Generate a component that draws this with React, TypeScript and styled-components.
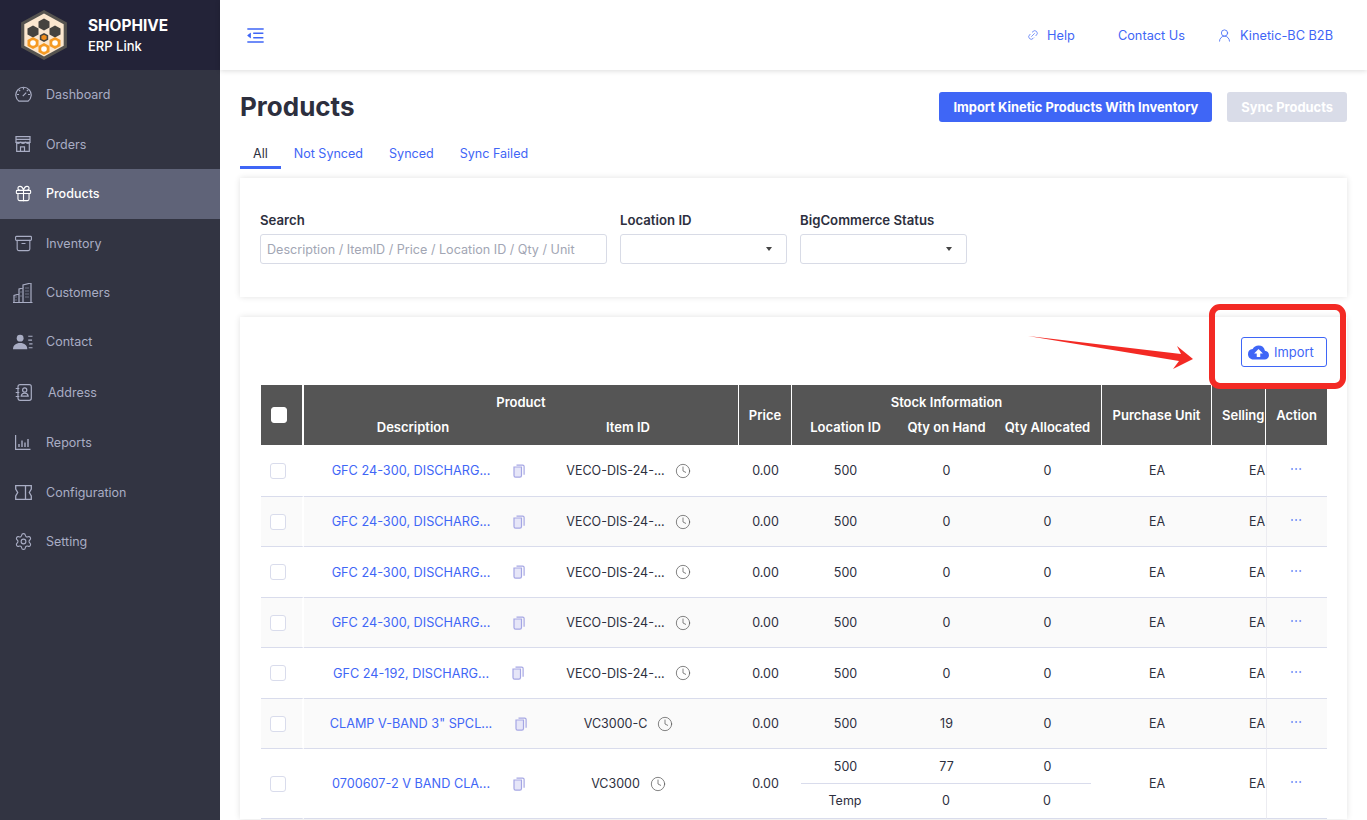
import styled, { createGlobalStyle } from 'styled-components';
import { Archive, Clock, Ellipsis, Gift, Link2, Settings, UserRound } from 'lucide-react';
import { AiOutlineMenuFold } from 'react-icons/ai';
import { MdCloudUpload } from 'react-icons/md';
import type { ReactNode } from 'react';

const BLUE = '#3f66f6';

const GlobalStyle = createGlobalStyle`
  html, body {
    margin: 0;
    height: 100%;
    overflow: hidden;
    background: #fff;
    font-family: Inter, "Liberation Sans", sans-serif;
    color: #2d2f3e;
  }
  * { box-sizing: border-box; }
`;

const Shell = styled.div`
  display: flex;
  height: 820px;
  overflow: hidden;
`;

const Sidebar = styled.aside`
  flex: 0 0 220px;
  background: #323442;
`;

const Brand = styled.div`
  display: flex;
  align-items: center;
  height: 70px;
  padding-left: 19px;
  gap: 19px;
  background: #232338;
  color: #fff;
`;

const BrandText = styled.div`
  display: flex;
  flex-direction: column;
  gap: 3px;
`;

const BrandName = styled.div`
  font-size: 15.4px;
  line-height: 18px;
  font-weight: 700;
`;

const BrandSub = styled.div`
  font-size: 13px;
  line-height: 16px;
  font-weight: 500;
`;

const NavItem = styled.div<{ $active?: boolean; $shift?: number; $h?: number }>`
  display: flex;
  align-items: center;
  height: ${(p) => p.$h || 49.5}px;
  padding-left: 13px;
  font-size: 12.5px;
  color: ${(p) => (p.$active ? '#fff' : '#a9adc4')};
  background: ${(p) => (p.$active ? '#5f6378' : 'transparent')};
  font-weight: ${(p) => (p.$active ? 500 : 400)};
  span { margin-left: ${(p) => 13 + (p.$shift || 0)}px; }
`;

const NavIcon = styled.div`
  display: flex;
  justify-content: center;
  align-items: center;
  width: 20px;
  height: 20px;
`;

const Main = styled.main`
  flex: 1;
  min-width: 0;
`;

const TopBar = styled.header`
  display: flex;
  align-items: center;
  height: 70px;
  padding: 0 34px 0 25px;
  background: #fff;
  box-shadow: 0 1px 5px rgb(0 0 0 / 14%);
  color: ${BLUE};
  position: relative;
`;

const TopLinks = styled.nav`
  display: flex;
  align-items: center;
  margin-left: auto;
  font-size: 12.75px;
`;

const TopLink = styled.a<{ $gap: number; $left: number }>`
  display: flex;
  align-items: center;
  gap: ${(p) => p.$gap}px;
  margin-left: ${(p) => p.$left}px;
`;

const Content = styled.div`
  padding: 22px 20px 0;
`;

const TitleRow = styled.div`
  display: flex;
  align-items: center;
  height: 30px;
  gap: 15px;
`;

const Title = styled.h1`
  margin: 0 auto 0 0;
  font-size: 26px;
  line-height: 30px;
  font-weight: 700;
`;

const Button = styled.button<{ $disabled?: boolean }>`
  height: 30px;
  border: 0;
  border-radius: 3px;
  padding: 0 14px;
  font: 700 12.9px Inter, sans-serif;
  color: #fff;
  background: ${(p) => (p.$disabled ? '#d9dce8' : BLUE)};
`;

const Tabs = styled.div`
  display: flex;
  margin-top: 23px;
  height: 24px;
`;

const Tab = styled.div<{ $active?: boolean }>`
  padding: 0 13px;
  font-size: 12.55px;
  line-height: 17px;
  color: ${(p) => (p.$active ? '#2d2f3e' : BLUE)};
  border-bottom: 3px solid ${(p) => (p.$active ? BLUE : 'transparent')};
`;

const Card = styled.section`
  background: #fff;
  box-shadow: 0 0 6px rgb(0 0 0 / 12%);
`;

const FilterCard = styled(Card)`
  display: grid;
  grid-template-columns: 347px 167px 167px;
  column-gap: 13px;
  margin-top: 9px;
  padding: 34px 20px 33px;
`;

const Field = styled.label`
  display: flex;
  flex-direction: column;
  gap: 6px;
`;

const FieldLabel = styled.div`
  font-size: 13.2px;
  line-height: 16px;
  font-weight: 600;
`;

const SearchInput = styled.input`
  height: 30px;
  padding: 0 6px;
  border: 1px solid #d8dbe6;
  border-radius: 3px;
  font: 400 12.6px Inter, sans-serif;
  &::placeholder { color: #a2a6b4; opacity: 1; }
`;

const SelectBox = styled.div`
  display: flex;
  align-items: center;
  justify-content: flex-end;
  height: 30px;
  padding-right: 14px;
  border: 1px solid #d8dbe6;
  border-radius: 3px;
`;

const Caret = styled.i`
  border-top: 4px solid #444;
  border-left: 3.5px solid transparent;
  border-right: 3.5px solid transparent;
`;

const TableCard = styled(Card)`
  position: relative;
  margin-top: 20px;
  padding: 20px 20px 0 21px;
`;

const TableTools = styled.div`
  display: flex;
  justify-content: flex-end;
  margin-bottom: 18px;
`;

const ImportButton = styled.button`
  display: flex;
  align-items: center;
  gap: 5px;
  width: 86px;
  height: 30px;
  padding: 0 6px;
  border: 1px solid ${BLUE};
  border-radius: 3px;
  background: #fff;
  color: ${BLUE};
  font: 400 12.9px Inter, sans-serif;
`;

const RedBox = styled.div`
  position: absolute;
  left: 969px;
  top: -13px;
  width: 137px;
  height: 85px;
  border: 6px solid #f32a24;
  border-radius: 11px;
`;

const ArrowMark = styled.svg`
  position: absolute;
  left: 788px;
  top: 16px;
`;

const Table = styled.table`
  width: 1066px;
  table-layout: fixed;
  border-collapse: separate;
  border-spacing: 0;
  font-size: 12.5px;
`;

const Th = styled.th<{ $line?: boolean; $upper?: boolean; $lower?: boolean }>`
  height: 30px;
  padding: ${(p) => (p.$upper ? '4px 0 0' : p.$lower ? '0 0 6px' : '0')};
  background: #555;
  color: #fff;
  font-size: 13px;
  font-weight: 600;
  text-align: center;
  white-space: nowrap;
  overflow: hidden;
  border-right: ${(p) => (p.$line ? '1px solid #fff' : '0')};
`;

const CheckTh = styled(Th)`
  border-right: 2px solid #fff;
`;

const DescTh = styled(Th)`
  padding-left: 4px;
`;

const SellingTh = styled(Th)`
  text-align: left;
  padding-left: 10px;
`;

const Row = styled.tr<{ $alt?: boolean }>`
  td { background: ${(p) => (p.$alt ? '#fafafa' : '#fff')}; }
`;

const Td = styled.td<{ $h: number }>`
  height: ${(p) => p.$h}px;
  padding: 0;
  text-align: center;
  border-bottom: 1px solid #d9dcec;
  white-space: nowrap;
`;

const CheckTd = styled(Td)`
  border-right: 2px solid #fff;
  padding-left: 9px;
`;

const SellingTd = styled(Td)`
  text-align: right;
  padding-right: 1px;
`;

const ActionTd = styled(Td)`
  color: ${BLUE};
  border-left: 1px solid #ececf1;
  line-height: 0;
  padding-right: 2px;
  svg { margin-top: -3px; }
`;

const Check = styled.div<{ $head?: boolean }>`
  width: 16px;
  height: 16px;
  border-radius: 3px;
  background: #fff;
  border: 1px solid ${(p) => (p.$head ? '#fff' : '#d9dcec')};
  margin-left: ${(p) => (p.$head ? 10 : 0)}px;
`;

const DescCell = styled.div`
  display: flex;
  justify-content: center;
  align-items: center;
`;

const ProductLink = styled.a`
  color: ${BLUE};
  font-size: 12.7px;
`;

const CopyMark = styled.svg`
  flex: none;
  margin: 0 -35px 0 23px;
`;

const ItemCell = styled.div`
  display: flex;
  justify-content: center;
  align-items: center;
  gap: 10px;
  svg { color: #555; flex: none; }
`;

const StockGrid = styled.div`
  display: grid;
  grid-template-columns: repeat(3, 101px);
  padding-left: 3px;
`;

const StockLine = styled(StockGrid)<{ $split?: boolean }>`
  padding-top: ${(p) => (p.$split ? 9 : 0)}px;
  padding-bottom: ${(p) => (p.$split ? 9 : 0)}px;
  & + & {
    border-top: 1px solid #d9dcec;
    margin: 0 11px 0 9px;
    padding-left: 0;
    grid-template-columns: 88px 114px 88px;
  }
`;

const HexLogo = () => {
  const hex = (cx: number, cy: number, r: number) =>
    [0, 1, 2, 3, 4, 5]
      .map((i) => {
        const a = (Math.PI / 3) * i - Math.PI / 2;
        return `${(cx + r * 1.06 * Math.cos(a)).toFixed(1)},${(cy + r * Math.sin(a)).toFixed(1)}`;
      })
      .join(' ');
  return (
    <svg width="50" height="54" viewBox="0 0 50 54">
      <polygon points={hex(25, 27, 25)} fill="#55534f" />
      <polygon points={hex(25, 27, 21.5)} fill="#fbe7cf" />
      {[[25, 16.5], [14, 23.5], [36, 23.5]].map(([x, y]) => (
        <polygon key={`${x}-${y}`} points={hex(x, y, 6)} fill="#45433f" />
      ))}
      <polygon points={hex(25, 29.5, 4.6)} fill="#45433f" />
      <polygon points={hex(25, 29.5, 2.8)} fill="#f08c1a" />
      {[[14, 35], [25, 41], [36, 35]].map(([x, y]) => (
        <g key={`${x}-${y}`}>
          <polygon points={hex(x, y, 6)} fill="#f59a23" />
          <circle cx={x} cy={y} r="2.8" fill="#fff" />
        </g>
      ))}
    </svg>
  );
};

const stroke = { fill: 'none', stroke: 'currentColor', strokeWidth: 1.2 };

const GaugeIcon = () => (
  <svg width="17" height="17" viewBox="0 0 17 17" {...stroke}>
    <path d="M4 15.2a7.7 7.7 0 1 1 9 0z" />
    <path d="M8.5 1.5v2M2 8.5h2M13 8.5h2M3.8 3.8l1.4 1.4M13.2 3.8l-1.4 1.4M7.8 10.2l3.4-3.6" />
  </svg>
);

const StoreIcon = () => (
  <svg width="16" height="16" viewBox="0 0 16 16" {...stroke}>
    <path d="M1 .7h14v5.6H1zM1 3.4h14" />
    <path d="M1.7 6.3v9h12.6v-9M5.5 15.3v-4.4h4v4.4" />
    <path d="M1 6.3q2.3 2 4.7 0 2.3 2 4.6 0 2.4 2 4.7 0" />
  </svg>
);

const AddressIcon = () => (
  <svg width="17" height="17" viewBox="0 0 17 17" {...stroke}>
    <rect x="3" y=".7" width="13.3" height="15.6" rx="2" />
    <path d="M.7 4.5h3.6M.7 8.5h3.6M.7 12.5h3.6" />
    <circle cx="9.7" cy="6" r="2.1" />
    <path d="M6.2 12.2c.3-2 1.7-3 3.5-3s3.2 1 3.5 3z" />
  </svg>
);

const BuildingsIcon = () => (
  <svg width="20" height="20" viewBox="0 0 20 20" {...stroke}>
    <path d="M1 19.5v-7l5-1.5v8.5M6 19.5V6l4-1v14.5M10 19.5V2l8-2v19.5M0 19.5h19.5" />
    <path d="M12.5 5h3M12.5 8h3M12.5 11h3M12.5 14h3M2.5 14h2M2.5 17h2M7.5 9h1M7.5 13h1" strokeDasharray="1 1" />
  </svg>
);

const ContactIcon = () => (
  <svg width="21" height="16" viewBox="0 0 21 16">
    <circle cx="7.5" cy="4" r="3.6" fill="currentColor" />
    <path d="M0 15.5c0-4 3-6.5 7.5-6.5s7.5 2.5 7.5 6.5z" fill="currentColor" />
    <path d="M16 2h4.5M16 6h4M17 10h3.5M16.5 14h4" {...stroke} />
  </svg>
);

const ReportsIcon = () => (
  <svg width="16" height="15" viewBox="0 0 16 15" {...stroke}>
    <path d="M.6 0v14.4H15.5" />
    <path d="M4 12V9M7 12V5.5M10 12V7.5M13 12V4" strokeWidth="1.4" />
  </svg>
);

const ConfigIcon = () => (
  <svg width="17" height="15" viewBox="0 0 17 15" {...stroke} strokeWidth="1.3">
    <path d="M.7.7h15.6v3.4l-2 3.4 2 3.4v3.4H.7v-3.4l2-3.4-2-3.4zM10.5.7v13.6" />
  </svg>
);

const CopyIcon = () => (
  <CopyMark width="12" height="14" viewBox="0 0 12 14" fill="none" stroke="#a5a6e4" strokeWidth="1.2">
    <path d="M3.5 1.2h6.2a1.4 1.4 0 0 1 1.4 1.4v8.2" />
    <path d="M1 3h7.5v8.5a1.6 1.6 0 0 1-1.6 1.6H2.6A1.6 1.6 0 0 1 1 11.5z" fill="#e6e6f8" />
  </CopyMark>
);

interface NavEntry {
  label: string;
  icon: ReactNode;
  active?: boolean;
  shift?: number;
  h?: number;
}

const lucideProps = { size: 19, strokeWidth: 1.4 };

const nav: NavEntry[] = [
  { label: 'Dashboard', icon: <GaugeIcon /> },
  { label: 'Orders', icon: <StoreIcon /> },
  { label: 'Products', icon: <Gift {...lucideProps} />, active: true },
  { label: 'Inventory', icon: <Archive {...lucideProps} /> },
  { label: 'Customers', icon: <BuildingsIcon /> },
  { label: 'Contact', icon: <ContactIcon />, h: 48.5 },
  { label: 'Address', icon: <AddressIcon />, shift: 2, h: 52 },
  { label: 'Reports', icon: <ReportsIcon /> },
  { label: 'Configuration', icon: <ConfigIcon /> },
  { label: 'Setting', icon: <Settings {...lucideProps} /> },
];

interface ProductRow {
  desc: string;
  item: string;
  h: number;
  stock: string[][];
}

const veco = (desc: string, h: number): ProductRow => ({ desc, item: 'VECO-DIS-24-...', h, stock: [['500', '0', '0']] });

const rows: ProductRow[] = [
  veco('GFC 24-300, DISCHARG...', 52),
  veco('GFC 24-300, DISCHARG...', 50),
  veco('GFC 24-300, DISCHARG...', 51),
  veco('GFC 24-300, DISCHARG...', 50),
  veco('GFC 24-192, DISCHARG...', 51),
  { desc: 'CLAMP V-BAND 3" SPCL...', item: 'VC3000-C', h: 50, stock: [['500', '19', '0']] },
  { desc: '0700607-2 V BAND CLA...', item: 'VC3000', h: 70, stock: [['500', '77', '0'], ['Temp', '0', '0']] },
];

export default function App() {
  return (
    <Shell>
      <GlobalStyle />
      <Sidebar>
        <Brand>
          <HexLogo />
          <BrandText>
            <BrandName>SHOPHIVE</BrandName>
            <BrandSub>ERP Link</BrandSub>
          </BrandText>
        </Brand>
        {nav.map((n) => (
          <NavItem key={n.label} $active={n.active} $shift={n.shift} $h={n.h}>
            <NavIcon>{n.icon}</NavIcon>
            <span>{n.label}</span>
          </NavItem>
        ))}
      </Sidebar>
      <Main>
        <TopBar>
          <AiOutlineMenuFold size={21} />
          <TopLinks>
            <TopLink $gap={8} $left={0}><Link2 size={12} strokeWidth={1.3} style={{ transform: 'rotate(-45deg)' }} />Help</TopLink>
            <TopLink $gap={0} $left={43}>Contact Us</TopLink>
            <TopLink $gap={8} $left={32}><UserRound size={15} strokeWidth={1.3} />Kinetic-BC B2B</TopLink>
          </TopLinks>
        </TopBar>
        <Content>
          <TitleRow>
            <Title>Products</Title>
            <Button>Import Kinetic Products With Inventory</Button>
            <Button $disabled>Sync Products</Button>
          </TitleRow>
          <Tabs>
            <Tab $active>All</Tab>
            <Tab>Not Synced</Tab>
            <Tab>Synced</Tab>
            <Tab>Sync Failed</Tab>
          </Tabs>
          <FilterCard>
            <Field>
              <FieldLabel>Search</FieldLabel>
              <SearchInput placeholder="Description / ItemID / Price / Location ID / Qty / Unit" />
            </Field>
            <Field>
              <FieldLabel>Location ID</FieldLabel>
              <SelectBox><Caret /></SelectBox>
            </Field>
            <Field>
              <FieldLabel>BigCommerce Status</FieldLabel>
              <SelectBox><Caret /></SelectBox>
            </Field>
          </FilterCard>
          <TableCard>
            <TableTools>
              <ImportButton><MdCloudUpload size={21} />Import</ImportButton>
            </TableTools>
            <RedBox />
            <ArrowMark width="170" height="40" viewBox="0 0 170 40">
              <polygon points="0,3 153,21 149,13 165,26 145,36 151,28" fill="#f32a24" />
            </ArrowMark>
            <Table>
              <colgroup>
                {[43, 214, 221, 53, 310, 110, 54, 61].map((w, i) => <col key={i} style={{ width: w }} />)}
              </colgroup>
              <thead>
                <tr>
                  <CheckTh rowSpan={2}><Check $head /></CheckTh>
                  <Th colSpan={2} $line $upper>Product</Th>
                  <Th rowSpan={2} $line>Price</Th>
                  <Th $line $upper>Stock Information</Th>
                  <Th rowSpan={2} $line>Purchase Unit</Th>
                  <SellingTh rowSpan={2} $line>Selling</SellingTh>
                  <Th rowSpan={2}>Action</Th>
                </tr>
                <tr>
                  <DescTh $lower>Description</DescTh>
                  <Th $line $lower>Item ID</Th>
                  <Th $line $lower>
                    <StockGrid><div>Location ID</div><div>Qty on Hand</div><div>Qty Allocated</div></StockGrid>
                  </Th>
                </tr>
              </thead>
              <tbody>
                {rows.map((r, i) => (
                  <Row key={i} $alt={i % 2 === 1}>
                    <CheckTd $h={r.h}><Check /></CheckTd>
                    <Td $h={r.h}>
                      <DescCell><ProductLink>{r.desc}</ProductLink><CopyIcon /></DescCell>
                    </Td>
                    <Td $h={r.h}>
                      <ItemCell>{r.item}<Clock size={16} strokeWidth={1.1} /></ItemCell>
                    </Td>
                    <Td $h={r.h}>0.00</Td>
                    <Td $h={r.h}>
                      {r.stock.map((s) => (
                        <StockLine key={s[0]} $split={r.stock.length > 1}>
                          {s.map((v, j) => <div key={j}>{v}</div>)}
                        </StockLine>
                      ))}
                    </Td>
                    <Td $h={r.h}>EA</Td>
                    <SellingTd $h={r.h}>EA</SellingTd>
                    <ActionTd $h={r.h}><Ellipsis size={14} strokeWidth={1} /></ActionTd>
                  </Row>
                ))}
              </tbody>
            </Table>
          </TableCard>
        </Content>
      </Main>
    </Shell>
  );
}
